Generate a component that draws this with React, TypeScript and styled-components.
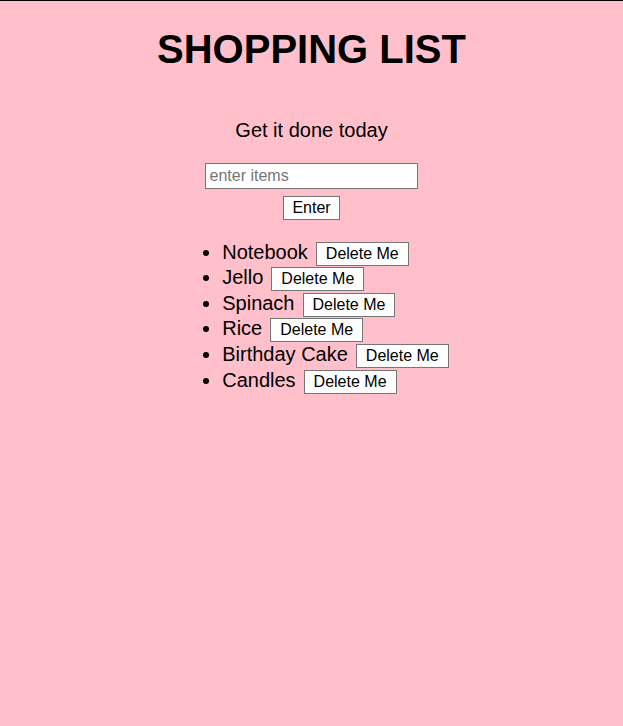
import React from "react";
import styled, { createGlobalStyle } from "styled-components";

const GlobalStyle = createGlobalStyle`
  html, body {
    margin: 0;
    padding: 0;
    background: #ffc0cb;
  }
  body {
    font-family: "Liberation Sans", Arial, sans-serif;
    color: #000;
    min-height: 726px;
    box-sizing: border-box;
    border-top: 1px solid #000;
  }
`;

const Page = styled.main`
  display: flex;
  flex-direction: column;
  align-items: center;
`;

const Title = styled.h1`
  margin: 25px 0 0;
  font-size: 40px;
  font-weight: bold;
  line-height: 46px;
`;

const Subtitle = styled.p`
  margin: 47px 0 0;
  font-size: 20px;
  line-height: 23px;
`;

const Form = styled.form`
  display: flex;
  flex-direction: column;
  align-items: center;
  gap: 7px;
  margin-top: 21px;
`;

const Input = styled.input`
  box-sizing: border-box;
  width: 213px;
  height: 26px;
  margin-right: 1px;
  padding: 1px 4px;
  border: 1px solid #767676;
  background: #fff;
  font-family: "Liberation Sans", Arial, sans-serif;
  font-size: 16px;
  color: #000;
  outline: none;
  &::placeholder {
    color: #757575;
  }
`;

const Button = styled.button<{ $px: number }>`
  box-sizing: border-box;
  height: 24px;
  margin: 0;
  padding: 2px ${(p) => p.$px}px;
  border: 1px solid #767676;
  border-radius: 0;
  background: #fff;
  font-family: "Liberation Sans", Arial, sans-serif;
  font-size: 16px;
  line-height: 18px;
  color: #000;
`;

const List = styled.ul`
  margin: 20.6px 0 0 8px;
  padding-left: 40px;
  font-size: 20px;
`;

const Item = styled.li`
  height: 25.6px;
  line-height: 23.6px;
`;

const DeleteButton = styled(Button)`
  margin-left: 8px;
`;

const items = ["Notebook", "Jello", "Spinach", "Rice", "Birthday Cake", "Candles"];

export default function App() {
  return (
    <>
      <GlobalStyle />
      <Page>
        <Title>SHOPPING LIST</Title>
        <Subtitle>Get it done today</Subtitle>
        <Form onSubmit={(e) => e.preventDefault()}>
          <Input placeholder="enter items" />
          <Button $px={8} type="submit">Enter</Button>
        </Form>
        <List>
          {items.map((it) => (
            <Item key={it}>
              {it}
              <DeleteButton $px={9} type="button">Delete Me</DeleteButton>
            </Item>
          ))}
        </List>
      </Page>
    </>
  );
}
